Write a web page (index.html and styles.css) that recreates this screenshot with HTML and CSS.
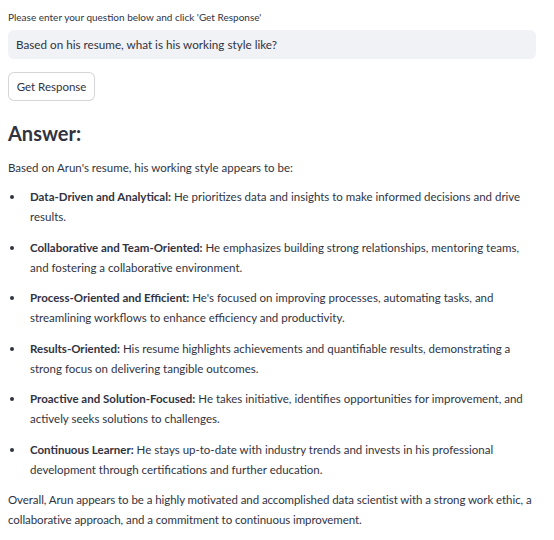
FILE: index.html
```html
<!DOCTYPE html>
<html lang="en">
<head>
<meta charset="utf-8">
<title>Resume Q&amp;A</title>
<link rel="stylesheet" href="styles.css">
</head>
<body>
<main class="page">
  <label class="label" for="q">Please enter your question below and click 'Get Response'</label>
  <div class="input" id="q">Based on his resume, what is his working style like?</div>
  <button class="btn" type="button">Get Response</button>
  <h2 class="heading">Answer:</h2>
  <p class="para intro">Based on Arun's resume, his working style appears to be:</p>
  <ul class="list">
    <li><strong>Data-Driven and Analytical:</strong> He prioritizes data and insights to make informed decisions and drive results.</li>
    <li><strong>Collaborative and Team-Oriented:</strong> He emphasizes building strong relationships, mentoring teams, and fostering a collaborative environment.</li>
    <li><strong>Process-Oriented and Efficient:</strong> He's focused on improving processes, automating tasks, and streamlining workflows to enhance efficiency and productivity.</li>
    <li><strong>Results-Oriented:</strong> His resume highlights achievements and quantifiable results, demonstrating a strong focus on delivering tangible outcomes.</li>
    <li><strong>Proactive and Solution-Focused:</strong> He takes initiative, identifies opportunities for improvement, and actively seeks solutions to challenges.</li>
    <li><strong>Continuous Learner:</strong> He stays up-to-date with industry trends and invests in his professional development through certifications and further education.</li>
  </ul>
  <p class="para outro">Overall, Arun appears to be a highly motivated and accomplished data scientist with a strong work ethic, a collaborative approach, and a commitment to continuous improvement.</p>
</main>
</body>
</html>
```

FILE: styles.css
```css
* { box-sizing: border-box; }
html, body { margin: 0; padding: 0; background: #ffffff; }
body {
  font-family: "Lato", "Noto Sans", sans-serif;
  color: #31333f;
}
.page {
  width: 554px;
  padding: 8px 18px 0 8px;
  display: flex;
  flex-direction: column;
  align-items: flex-start;
}
.label {
  font-size: 10px;
  line-height: 18px;
  height: 18px;
}
.input {
  margin-top: 4px;
  width: 100%;
  height: 29px;
  background: #f0f2f6;
  border-radius: 6px;
  padding: 0 8px;
  font-size: 11.7px;
  line-height: 29px;
}
.btn {
  margin-top: 13px;
  height: 29px;
  width: 87px;
  padding: 0;
  background: #ffffff;
  border: 1px solid rgba(49, 51, 63, 0.2);
  border-radius: 6px;
  font-family: inherit;
  font-size: 11.5px;
  color: #31333f;
}
.heading {
  margin: 18px 0 0;
  font-size: 20px;
  line-height: 28px;
  font-weight: 700;
}
.para {
  margin: 0;
  font-size: 11.5px;
  line-height: 20px;
}
.intro { margin-top: 11px; }
.list {
  margin: 9px 0 0;
  padding: 0 0 0 22px;
  list-style: none;
  font-size: 11.5px;
  line-height: 20px;
  display: flex;
  flex-direction: column;
  gap: 10.6px;
  width: 100%;
}
.list li {
  position: relative;
}
.list li::before {
  content: "";
  position: absolute;
  left: -20px;
  top: 8px;
  width: 4px;
  height: 4px;
  border-radius: 50%;
  background: #31333f;
}
.list strong { font-weight: 700; }
.outro {
  margin-top: 10.5px;
  letter-spacing: -0.07px;
}
```
